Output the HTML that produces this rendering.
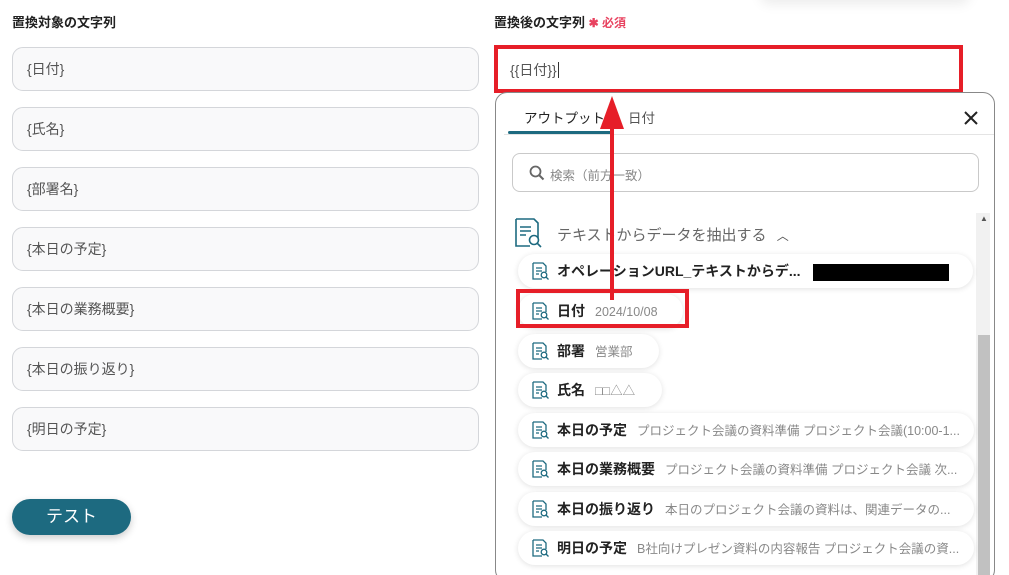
<!DOCTYPE html><html><head><meta charset="utf-8"><style>
*{box-sizing:border-box;margin:0;padding:0}
html,body{width:1009px;height:575px;overflow:hidden}
body{background:#fff;position:relative;font-family:"Liberation Sans","Noto Sans CJK JP",sans-serif;color:#222}
.a{position:absolute}
.lbl{font-size:13px;font-weight:bold;color:#222}
.in{position:absolute;left:12px;width:467px;height:44px;border:1px solid #d4d6da;border-radius:11px;background:#f9f9fa;font-size:14px;color:#555;padding:11px 14px}
.pill{position:absolute;left:518px;height:34px;background:#fff;border-radius:17px;box-shadow:0 1px 6px rgba(0,0,0,.12);font-size:14px;padding:7px 0 0 39px;white-space:nowrap}
.pill b{color:#222;margin-right:10px}
.pill span{color:#888;font-size:12.5px}
.ic{position:absolute;left:14px;top:8px}
</style></head><body>
<div class="a" style="left:760px;top:-20px;width:210px;height:20px;box-shadow:0 4px 12px rgba(0,0,0,.08);border-radius:10px"></div>
<div class="a lbl" style="left:12px;top:12px">置換対象の文字列</div>
<div class="in" style="top:47px">{日付}</div>
<div class="in" style="top:107px">{氏名}</div>
<div class="in" style="top:167px">{部署名}</div>
<div class="in" style="top:227px">{本日の予定}</div>
<div class="in" style="top:287px">{本日の業務概要}</div>
<div class="in" style="top:347px">{本日の振り返り}</div>
<div class="in" style="top:407px">{明日の予定}</div>
<div class="a" style="left:12px;top:499px;width:119px;height:36px;border-radius:18px;background:#1d6a80;color:#fff;font-size:17px;text-align:center;line-height:36px;box-shadow:0 3px 8px rgba(0,0,0,.2)">テスト</div>

<div class="a lbl" style="left:494px;top:12px">置換後の文字列 <span style="color:#e8425f;font-size:12px">✱ 必須</span></div>
<div class="a" style="left:494px;top:45px;width:469px;height:48px;border:4px solid #e61e28;background:#fff;font-size:14px;color:#555;padding:11px 12px">{{日付}}<span style="border-left:1px solid #333;margin-left:1px"></span></div>

<div class="a" style="left:495px;top:92px;width:500px;height:490px;border:1px solid #888;border-radius:12px;background:#fff;overflow:hidden">
 <div class="a" style="left:28px;top:14px;font-size:13.5px;color:#222">アウトプット</div>
 <div class="a" style="left:132px;top:14px;font-size:13.5px;color:#555">日付</div>
 <div class="a" style="left:12px;top:38px;width:104px;height:3px;background:#1d6a80;border-radius:2px"></div>
 <div class="a" style="left:8px;top:41px;width:492px;height:1px;background:#e4e4e4"></div>
 <svg class="a" style="left:467px;top:17px" width="16" height="16"><path d="M2 2L14 14M14 2L2 14" stroke="#222" stroke-width="2"/></svg>
 <div class="a" style="left:16px;top:60px;width:467px;height:39px;border:1px solid #c9c9c9;border-radius:8px"></div>
 <svg class="a" style="left:33px;top:72px" width="16" height="16"><circle cx="6.5" cy="6.5" r="5" fill="none" stroke="#666" stroke-width="1.8"/><path d="M10 10L14.5 14.5" stroke="#666" stroke-width="2"/></svg>
 <div class="a" style="left:54px;top:72px;font-size:12.5px;color:#888">検索（前方一致）</div>
 <div class="a" style="left:480px;top:120px;width:14px;height:380px;background:#f1f1f1"></div>
 <div class="a" style="left:482px;top:242px;width:12px;height:260px;background:#c1c1c1"></div>
 <div class="a" style="left:484px;top:121px;font-size:8px;color:#555">▲</div>
 <svg class="a" style="left:18px;top:125px" width="30" height="30"><path d="M2 1H20L24 5V20" fill="none" stroke="#1d6a80" stroke-width="1.6"/><path d="M2 1V28H16" fill="none" stroke="#1d6a80" stroke-width="1.6"/><path d="M6 9H17M6 13H17M6 17H12" stroke="#1d6a80" stroke-width="1.6"/><circle cx="20" cy="22" r="4.5" fill="#fff" stroke="#1d6a80" stroke-width="1.6"/><path d="M23 25L27 29" stroke="#1d6a80" stroke-width="1.6"/></svg>
 <div class="a" style="left:61px;top:131px;font-size:15px;color:#666">テキストからデータを抽出する <span style="font-size:12px;color:#555;margin-left:6px">︿</span></div>
</div>

<div class="pill" style="top:254px;width:455px"><svg class="ic" width="18" height="18"><path d="M1 1H11L14 4V10M1 1V17H10M4 6H10M4 9H10M4 12H7" fill="none" stroke="#1d6a80" stroke-width="1.3"/><circle cx="12" cy="13" r="2.8" fill="#fff" stroke="#1d6a80" stroke-width="1.3"/><path d="M14 15L16.5 17.5" stroke="#1d6a80" stroke-width="1.3"/></svg><b>オペレーションURL_テキストからデ...</b></div>
<div class="a" style="left:813px;top:264px;width:136px;height:17px;background:#000"></div>
<div class="pill" style="top:294px;width:165px"><svg class="ic" width="18" height="18"><path d="M1 1H11L14 4V10M1 1V17H10M4 6H10M4 9H10M4 12H7" fill="none" stroke="#1d6a80" stroke-width="1.3"/><circle cx="12" cy="13" r="2.8" fill="#fff" stroke="#1d6a80" stroke-width="1.3"/><path d="M14 15L16.5 17.5" stroke="#1d6a80" stroke-width="1.3"/></svg><b>日付</b><span>2024/10/08</span></div>
<div class="pill" style="top:334px;width:141px"><svg class="ic" width="18" height="18"><path d="M1 1H11L14 4V10M1 1V17H10M4 6H10M4 9H10M4 12H7" fill="none" stroke="#1d6a80" stroke-width="1.3"/><circle cx="12" cy="13" r="2.8" fill="#fff" stroke="#1d6a80" stroke-width="1.3"/><path d="M14 15L16.5 17.5" stroke="#1d6a80" stroke-width="1.3"/></svg><b>部署</b><span>営業部</span></div>
<div class="pill" style="top:373px;width:144px"><svg class="ic" width="18" height="18"><path d="M1 1H11L14 4V10M1 1V17H10M4 6H10M4 9H10M4 12H7" fill="none" stroke="#1d6a80" stroke-width="1.3"/><circle cx="12" cy="13" r="2.8" fill="#fff" stroke="#1d6a80" stroke-width="1.3"/><path d="M14 15L16.5 17.5" stroke="#1d6a80" stroke-width="1.3"/></svg><b>氏名</b><span>□□△△</span></div>
<div class="pill" style="top:413px;width:456px"><svg class="ic" width="18" height="18"><path d="M1 1H11L14 4V10M1 1V17H10M4 6H10M4 9H10M4 12H7" fill="none" stroke="#1d6a80" stroke-width="1.3"/><circle cx="12" cy="13" r="2.8" fill="#fff" stroke="#1d6a80" stroke-width="1.3"/><path d="M14 15L16.5 17.5" stroke="#1d6a80" stroke-width="1.3"/></svg><b>本日の予定</b><span>プロジェクト会議の資料準備 プロジェクト会議(10:00-1...</span></div>
<div class="pill" style="top:452px;width:456px"><svg class="ic" width="18" height="18"><path d="M1 1H11L14 4V10M1 1V17H10M4 6H10M4 9H10M4 12H7" fill="none" stroke="#1d6a80" stroke-width="1.3"/><circle cx="12" cy="13" r="2.8" fill="#fff" stroke="#1d6a80" stroke-width="1.3"/><path d="M14 15L16.5 17.5" stroke="#1d6a80" stroke-width="1.3"/></svg><b>本日の業務概要</b><span>プロジェクト会議の資料準備 プロジェクト会議 次...</span></div>
<div class="pill" style="top:492px;width:456px"><svg class="ic" width="18" height="18"><path d="M1 1H11L14 4V10M1 1V17H10M4 6H10M4 9H10M4 12H7" fill="none" stroke="#1d6a80" stroke-width="1.3"/><circle cx="12" cy="13" r="2.8" fill="#fff" stroke="#1d6a80" stroke-width="1.3"/><path d="M14 15L16.5 17.5" stroke="#1d6a80" stroke-width="1.3"/></svg><b>本日の振り返り</b><span>本日のプロジェクト会議の資料は、関連データの...</span></div>
<div class="pill" style="top:531px;width:456px"><svg class="ic" width="18" height="18"><path d="M1 1H11L14 4V10M1 1V17H10M4 6H10M4 9H10M4 12H7" fill="none" stroke="#1d6a80" stroke-width="1.3"/><circle cx="12" cy="13" r="2.8" fill="#fff" stroke="#1d6a80" stroke-width="1.3"/><path d="M14 15L16.5 17.5" stroke="#1d6a80" stroke-width="1.3"/></svg><b>明日の予定</b><span>B社向けプレゼン資料の内容報告 プロジェクト会議の資...</span></div>

<div class="a" style="left:516px;top:289px;width:173px;height:39px;border:4px solid #e61e28"></div>
<svg class="a" style="left:595px;top:94px" width="36" height="210"><path d="M17 24V206" stroke="#e61e28" stroke-width="4"/><path d="M5 35L17 2L29 35Z" fill="#e61e28"/></svg>
</body></html>
